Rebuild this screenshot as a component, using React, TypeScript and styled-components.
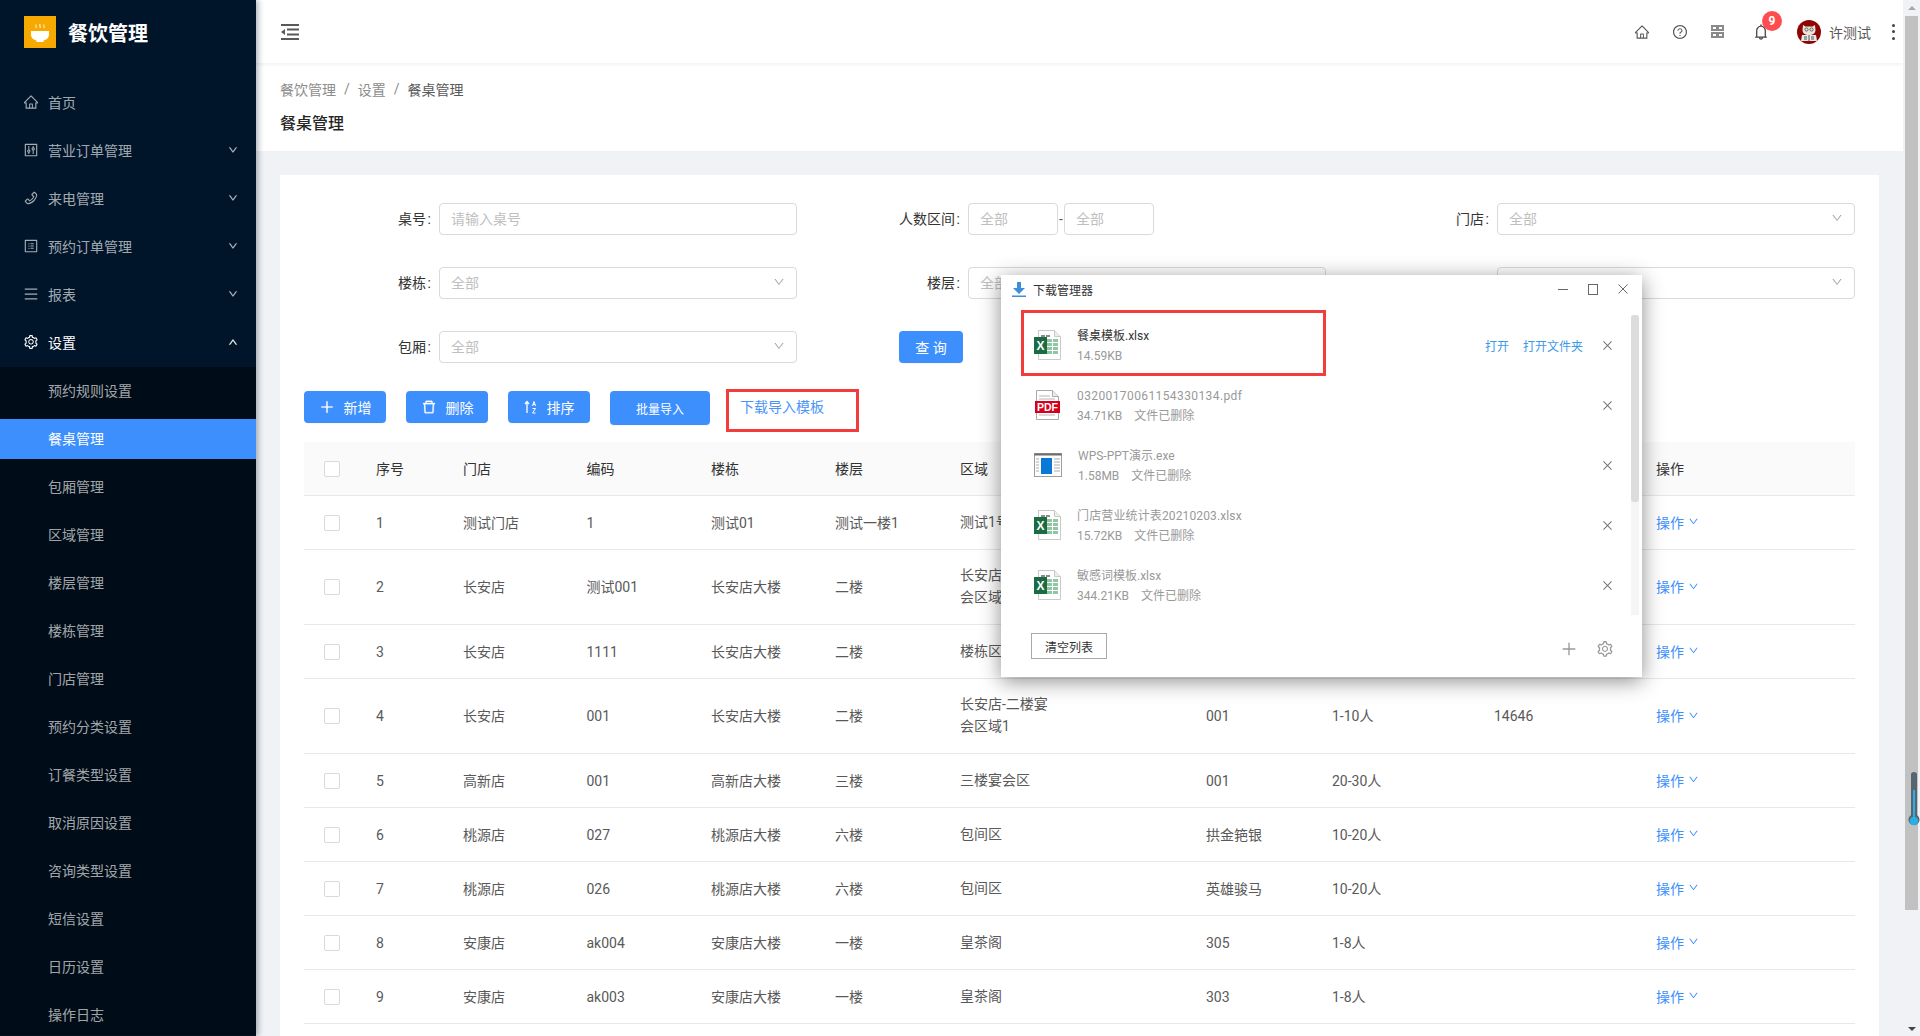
import React from 'react';
import styled, { createGlobalStyle } from 'styled-components';
import {
  AiOutlineHome, AiOutlineControl, AiOutlinePhone, AiOutlineProfile, AiOutlineMenu, AiOutlineSetting,
  AiOutlineDown, AiOutlineUp, AiOutlineQuestionCircle, AiOutlineBell, AiOutlinePlus, AiOutlineDelete,
  AiOutlineClose,
} from 'react-icons/ai';

const FONT = `Roboto, "Noto Sans CJK SC", "Noto Sans", sans-serif`;

const Global = createGlobalStyle`
  * { box-sizing: border-box; }
  html, body { margin: 0; padding: 0; height: 100%; overflow: hidden; }
  body { font-family: ${FONT}; font-size: 14px; color: #595959; background: #f0f2f5; }
  #root { height: 1036px; }
`;

const Page = styled.div`
  position: relative;
  display: flex;
  width: 1920px;
  height: 1036px;
  overflow: hidden;
`;

/* ---------- sidebar ---------- */
const Sidebar = styled.aside`
  width: 256px;
  flex: none;
  background: #001529;
  box-shadow: 2px 0 6px rgba(0, 21, 41, 0.35);
  z-index: 3;
  overflow: hidden;
`;
const Brand = styled.div`
  display: flex;
  align-items: center;
  gap: 12px;
  height: 64px;
  padding-left: 24px;
`;
const BrandName = styled.span`
  font-size: 20px;
  font-weight: 700;
  color: #fff;
`;
const Menu = styled.nav`
  padding-top: 18px;
`;
const MenuItem = styled.div<{ $light?: boolean }>`
  display: flex;
  align-items: center;
  height: 40px;
  margin-bottom: 8px;
  padding: 0 18px 0 23px;
  color: ${(p) => (p.$light ? '#fff' : 'rgba(255,255,255,.65)')};
  svg.lead { font-size: 16px; margin-right: 9px; flex: none; }
  svg.arrow { font-size: 10px; margin-left: auto; stroke: currentColor; stroke-width: 50; }
`;
const SubMenu = styled.div`
  background: #000c17;
  padding-top: 4px;
  margin-top: -3px;
`;
const SubItem = styled.div<{ $active?: boolean }>`
  height: 40px;
  line-height: 40px;
  margin-bottom: 8px;
  padding-left: 48px;
  color: ${(p) => (p.$active ? '#fff' : 'rgba(255,255,255,.65)')};
  background: ${(p) => (p.$active ? '#3d8ffe' : 'transparent')};
`;

/* ---------- main ---------- */
const Main = styled.main`
  flex: 1;
  min-width: 0;
  display: flex;
  flex-direction: column;
`;
const Header = styled.header`
  height: 63px;
  flex: none;
  display: flex;
  align-items: center;
  padding-left: 25px;
  background: #fff;
  box-shadow: 0 1px 4px rgba(0, 21, 41, 0.08);
  position: relative;
  z-index: 2;
`;
const HeaderRight = styled.div`
  margin-left: auto;
  display: flex;
  align-items: center;
  color: #555;
  padding-right: 8px;
`;
const HeaderIcon = styled.span<{ $w: number }>`
  width: ${(p) => p.$w}px;
  display: flex;
  color: #555;
  font-size: 16px;
`;
const BellWrap = styled.span`
  position: relative;
  display: flex;
  width: 45px;
  font-size: 18px;
  color: #444;
`;
const Badge = styled.span`
  position: absolute;
  left: 10px;
  top: -12px;
  width: 20px;
  height: 20px;
  border-radius: 50%;
  background: #ff4d4f;
  color: #fff;
  font-size: 12px;
  font-weight: 700;
  line-height: 20px;
  text-align: center;
`;
const UserName = styled.span`
  margin-left: 8px;
  width: 63px;
  color: #595959;
`;
const Dots = styled.span`
  display: flex;
  flex-direction: column;
  gap: 3.5px;
  i { width: 3px; height: 3px; border-radius: 50%; background: #444; display: block; }
`;
const PageHead = styled.div`
  height: 88px;
  flex: none;
  padding: 16px 0 0 24px;
  background: #fff;
`;
const Crumbs = styled.div`
  display: flex;
  align-items: center;
  height: 20px;
  color: #8c8c8c;
  span.sep { margin: 0 8px; color: #8c8c8c; }
  span.cur { color: #595959; }
`;
const PageTitle = styled.h1`
  margin: 13px 0 0;
  font-size: 16px;
  font-weight: 500;
  line-height: 24px;
  color: #262626;
`;
const Card = styled.section`
  flex: 1;
  margin: 24px 24px 0;
  padding: 28px 24px 0;
  background: #fff;
  min-height: 0;
  overflow: hidden;
`;
const FormGrid = styled.div`
  display: grid;
  grid-template-columns: repeat(3, 493px);
  column-gap: 36px;
  row-gap: 32px;
`;
const Field = styled.div`
  display: flex;
  align-items: center;
  height: 32px;
`;
const Label = styled.label`
  width: 135px;
  flex: none;
  padding: 0 8px 2px 0;
  text-align: right;
  color: #333;
  span { margin-left: 1.5px; }
`;
const InputBox = styled.div<{ $w?: number }>`
  display: flex;
  align-items: center;
  justify-content: space-between;
  height: 32px;
  flex: ${(p) => (p.$w ? 'none' : '1')};
  width: ${(p) => (p.$w ? `${p.$w}px` : 'auto')};
  padding: 0 11px 2px;
  border: 1px solid #d9d9d9;
  border-radius: 4px;
  color: #bfbfbf;
  background: #fff;
  svg { font-size: 12px; color: #a6a6a6; }
`;
const Dash = styled.span`
  width: 6px;
  text-align: center;
  color: #595959;
  line-height: 1;
`;
const QueryCell = styled.div`
  padding-left: 66px;
`;
const PrimaryButton = styled.button<{ $w: number; $h?: number; $ml?: number; $small?: boolean }>`
  display: inline-flex;
  align-items: center;
  justify-content: center;
  gap: 9px;
  width: ${(p) => p.$w}px;
  height: ${(p) => p.$h ?? 32}px;
  margin-left: ${(p) => p.$ml ?? 0}px;
  padding: 0;
  border: 0;
  border-radius: 4px;
  background: #3d8ffe;
  color: #fff;
  font-family: inherit;
  font-size: ${(p) => (p.$small ? 12 : 14)}px;
  box-shadow: 0 1px 0 rgba(0, 0, 0, 0.03);
  svg { font-size: 16px; stroke: currentColor; stroke-width: 20; }
`;
const Actions = styled.div`
  display: flex;
  align-items: flex-start;
  margin-top: 28px;
  height: 51px;
`;
const TemplateLink = styled.a`
  display: block;
  width: 133px;
  height: 43px;
  margin: -2px 0 0 16px;
  padding: 4px 0 0 11px;
  border: 3px solid #f33c3c;
  color: #4b94f7;
  line-height: 22px;
`;
const Table = styled.div`
  width: 100%;
`;
const Row = styled.div<{ $head?: boolean; $tall?: boolean }>`
  display: grid;
  grid-template-columns: 72px 87px 123.5px 124.5px 124px 125px 246px 126px 162px 162px 199px;
  align-items: center;
  height: ${(p) => (p.$head ? 54 : p.$tall ? 75 : 54)}px;
  background: ${(p) => (p.$head ? '#fafafa' : '#fff')};
  color: ${(p) => (p.$head ? '#333' : '#595959')};
  border-bottom: 1px solid #e8e8e8;
`;
const Cell = styled.div<{ $latin?: boolean; $area?: boolean }>`
  padding-bottom: ${(p) => (p.$latin ? 0 : 2)}px;
  max-width: ${(p) => (p.$area ? '100px' : 'none')};
  line-height: ${(p) => (p.$area ? '22px' : 'inherit')};
`;
const CheckCell = styled.div`
  padding-left: 20px;
  display: flex;
`;
const CheckBox = styled.span`
  width: 16px;
  height: 16px;
  border: 1px solid #d9d9d9;
  border-radius: 2px;
  background: #fff;
`;
const OpLink = styled.a`
  display: inline-flex;
  align-items: center;
  gap: 4px;
  color: #3d8ffe;
  svg { font-size: 11px; }
`;

/* ---------- download manager ---------- */
const Popup = styled.div`
  position: absolute;
  left: 1001px;
  top: 275px;
  width: 641px;
  height: 402px;
  background: #fff;
  box-shadow: 0 4px 20px rgba(0, 0, 0, 0.45);
  z-index: 5;
  display: flex;
  flex-direction: column;
  font-size: 12px;
`;
const PopupBar = styled.div`
  height: 28px;
  flex: none;
  display: flex;
  align-items: center;
  padding: 0 14px 0 11px;
  color: #333;
`;
const PopupTitle = styled.span`
  margin-left: 7px;
`;
const WinButtons = styled.div`
  margin-left: auto;
  display: flex;
  align-items: center;
  gap: 20px;
  color: #666;
`;
const PopupBody = styled.div`
  position: relative;
  flex: 1;
  margin-top: 12px;
  padding-left: 20px;
  min-height: 0;
`;
const PopScrollTrack = styled.div`
  position: absolute;
  right: 3px;
  top: 0;
  width: 8px;
  height: 300px;
  background: #f5f5f5;
`;
const PopScrollThumb = styled.div`
  height: 187px;
  background: #dcdcdc;
  border-radius: 3px;
`;
const FileRow = styled.div`
  position: relative;
  height: 60px;
  display: flex;
  align-items: center;
  padding-left: 13px;
  padding-right: 28px;
`;
const RedBox = styled.div`
  position: absolute;
  left: 0;
  top: -5px;
  width: 305px;
  height: 66px;
  border: 3px solid #f33c3c;
  pointer-events: none;
`;
const FileInfo = styled.div`
  margin: 2px 0 0 16px;
  display: flex;
  flex-direction: column;
  gap: 3px;
  line-height: 17px;
`;
const FileName = styled.div<{ $gone?: boolean; $spacing?: number }>`
  color: ${(p) => (p.$gone ? '#999' : '#333')};
  letter-spacing: ${(p) => p.$spacing ?? 0}px;
`;
const FileMeta = styled.div`
  color: #999;
  span { margin-left: 12px; }
`;
const FileLinks = styled.div`
  margin-left: auto;
  display: flex;
  gap: 14px;
  color: #3c9ae8;
`;
const RemoveBtn = styled.span<{ $alone?: boolean }>`
  margin-left: ${(p) => (p.$alone ? 'auto' : '18px')};
  display: flex;
  color: #777;
  font-size: 13px;
`;
const PopupFoot = styled.div`
  height: 62px;
  flex: none;
  display: flex;
  align-items: flex-start;
  padding: 18px 28px 0 30px;
`;
const ClearBtn = styled.button`
  width: 76px;
  height: 26px;
  margin: 0;
  border: 1px solid #aaa;
  background: #fff;
  color: #333;
  font: inherit;
  padding: 0;
`;
const FootIcons = styled.div`
  margin-left: auto;
  margin-top: 7px;
  display: flex;
  gap: 18px;
  color: #999;
  font-size: 18px;
`;

/* ---------- scrollbar ---------- */
const ScrollBar = styled.div`
  width: 17px;
  flex: none;
  background: #f0f2f5;
  display: flex;
  flex-direction: column;
  align-items: flex-end;
  position: relative;
  z-index: 3;
`;
const ScrollArrowUp = styled.div`
  margin: 6px 4px 0 0;
  width: 0;
  height: 0;
  border-left: 4px solid transparent;
  border-right: 4px solid transparent;
  border-bottom: 4px solid #a8a8a8;
`;
const ScrollThumb = styled.div`
  margin: 6px 2px 0 0;
  width: 13px;
  height: 894px;
  background: #c1c1c1;
`;
const ScrollArrowDown = styled.div`
  margin: 117px 4px 0 0;
  width: 0;
  height: 0;
  border-left: 4px solid transparent;
  border-right: 4px solid transparent;
  border-top: 4px solid #444;
`;
const Thermo = styled.svg`
  position: absolute;
  left: 1908px;
  top: 772px;
  z-index: 6;
`;

/* ---------- drawings ---------- */
const Logo = () => (
  <svg width="32" height="32" viewBox="0 0 32 32">
    <rect width="32" height="32" fill="#f7a900" />
    <path d="M7 15h18v3c0 4-2.500 6-5.500 6.500v1.500h-7v-1.500C9.500 24 7 22 7 18z" fill="#fff" />
    <path d="M12 8.500c-.8 1.500.8 2 0 3.500M16 8c-.8 1.500.8 2.500 0 4M20 8.500c-.8 1.500.8 2 0 3.500" stroke="#fff" strokeWidth="1" fill="none" />
  </svg>
);
const FoldIcon = () => (
  <svg width="18" height="16" viewBox="0 0 18 16" style={{ display: 'block' }}>
    <path d="M0 0h18v2H0zM6 4.500h12v2H6zM6 9.500h12v2H6zM0 14h18v2H0z" fill="#595959" />
    <path d="M4 5v6L0 8z" fill="#595959" />
  </svg>
);
const GridIcon = () => (
  <svg width="13" height="13" viewBox="0 0 13 13" style={{ display: 'block' }}>
    <path d="M0 0h13v6H0zM0 7h13v6H0z" fill="#8a8a8a" />
    <path d="M2 2h3v2H2zM8 2h3v2H8zM2 9h3v2H2zM8 9h3v2H8z" fill="#fff" />
  </svg>
);
const SortIcon = () => (
  <svg width="14" height="14" viewBox="0 0 14 14" fill="none" style={{ width: 14, height: 14 }}>
    <path d="M3 13V1.500M1 4l2-2.500L5 4" strokeWidth="1.300" stroke="#fff" />
    <path d="M8.500 6 10 1.500 11.500 6M9 4.500h2M8.500 8.500h3l-3 4.500h3" strokeWidth="1" stroke="#fff" />
  </svg>
);
const Avatar = () => (
  <svg width="24" height="24" viewBox="0 0 24 24">
    <circle cx="12" cy="12" r="12" fill="#8f0505" />
    <path d="M6 5l2.500 1.500h7L18 5l.5 5c0 3-2.500 5-6.500 5s-6.500-2-6.500-5z" fill="#ece4da" />
    <circle cx="9.500" cy="9.500" r="1.600" fill="none" stroke="#333" strokeWidth=".7" />
    <circle cx="14.500" cy="9.500" r="1.600" fill="none" stroke="#333" strokeWidth=".7" />
    <path d="M5 15h14l1 6H4z" fill="#e8e8e8" />
    <path d="M12 15v6M7 17h3M14 17h3M7 19h3M14 19h3" stroke="#444" strokeWidth=".9" />
  </svg>
);
const ExcelIcon = () => (
  <svg width="27" height="30" viewBox="0 0 27 30">
    <path d="M4.500.5h16l6 6v23h-22z" fill="#fff" stroke="#c9c9c9" />
    <path d="M20.500.5v6h6" fill="#eee" stroke="#c9c9c9" />
    <path d="M7 5h4v2H7zM12 5h4v2h-4z" fill="#8d8d8d" />
    <g fill="#8fc7a5">
      {[9, 13, 17, 21].map((y) => (
        <React.Fragment key={y}>
          <rect x="13" y={y} width="5" height="3" />
          <rect x="19" y={y} width="5" height="3" />
        </React.Fragment>
      ))}
    </g>
    <rect y="7" width="13" height="17" fill="#1c6b42" />
    <text x="6.500" y="19.500" textAnchor="middle" fontSize="12" fontWeight="700" fill="#fff" fontFamily="Liberation Sans, sans-serif">X</text>
  </svg>
);
const PdfIcon = () => (
  <svg width="27" height="30" viewBox="0 0 27 30">
    <path d="M2.500.5h16l6 6v23h-22z" fill="#fff" stroke="#a9a9a9" />
    <path d="M18.500.5v6h6" fill="#eee" stroke="#a9a9a9" />
    <path d="M5 6h11M5 9h16M5 25h16" stroke="#b5b5b5" />
    <rect x="1" y="11" width="25" height="12" fill="#d6001c" />
    <text x="13.500" y="21" textAnchor="middle" fontSize="10.500" fontWeight="700" fill="#fff" fontFamily="Liberation Sans, sans-serif">PDF</text>
  </svg>
);
const ExeIcon = () => (
  <svg width="28" height="30" viewBox="0 0 28 30">
    <rect x=".5" y="3.500" width="27" height="23" fill="#fff" stroke="#9d9d9d" />
    <rect x=".5" y="3.500" width="27" height="2" fill="#6d6d6d" />
    <rect x="7" y="8" width="11" height="16" fill="#0a78d6" />
    <path d="M2 9h3M2 12h3M2 15h3M2 18h3M2 21h3M20 9h6M20 12h6M20 15h6M20 18h6M20 21h6" stroke="#aaa" />
  </svg>
);
const DownloadMark = () => (
  <svg width="14" height="15" viewBox="0 0 14 15" style={{ display: 'block' }}>
    <path d="M5 0h4v6h4l-6 6-6-6h4z" fill="#3f8fd8" />
    <path d="M0 13.500h14V15H0z" fill="#3f8fd8" />
  </svg>
);
const ThermoIcon = () => (
  <Thermo width="12" height="56" viewBox="0 0 12 56">
    <path d="M3 2.500a3 2.500 0 0 1 6 0V43a5.500 5.500 0 1 1-6 0z" fill="#56656f" />
    <rect x="5" y="18" width="2" height="28" fill="#29aee6" />
    <circle cx="6" cy="49" r="4.300" fill="#29aee6" />
  </Thermo>
);

/* ---------- data ---------- */
const subItems = ['预约规则设置', '餐桌管理', '包厢管理', '区域管理', '楼层管理', '楼栋管理', '门店管理', '预约分类设置', '订餐类型设置', '取消原因设置', '咨询类型设置', '短信设置', '日历设置', '操作日志'];
const topItems = [
  { name: '营业订单管理', Icon: AiOutlineControl },
  { name: '来电管理', Icon: AiOutlinePhone },
  { name: '预约订单管理', Icon: AiOutlineProfile },
  { name: '报表', Icon: AiOutlineMenu },
];
const heads = ['序号', '门店', '编码', '楼栋', '楼层', '区域', '包厢', '人数', '电话', '操作'];
const rows: { c: string[]; tall?: boolean }[] = [
  { c: ['1', '测试门店', '1', '测试01', '测试一楼1', '测试1号区域', '', '', ''] },
  { c: ['2', '长安店', '测试001', '长安店大楼', '二楼', '长安店-二楼宴会区域', '', '', ''], tall: true },
  { c: ['3', '长安店', '1111', '长安店大楼', '二楼', '楼栋区域', '', '', ''] },
  { c: ['4', '长安店', '001', '长安店大楼', '二楼', '长安店-二楼宴会区域1', '001', '1-10人', '14646'], tall: true },
  { c: ['5', '高新店', '001', '高新店大楼', '三楼', '三楼宴会区', '001', '20-30人', ''] },
  { c: ['6', '桃源店', '027', '桃源店大楼', '六楼', '包间区', '拱金筢银', '10-20人', ''] },
  { c: ['7', '桃源店', '026', '桃源店大楼', '六楼', '包间区', '英雄骏马', '10-20人', ''] },
  { c: ['8', '安康店', 'ak004', '安康店大楼', '一楼', '皇茶阁', '305', '1-8人', ''] },
  { c: ['9', '安康店', 'ak003', '安康店大楼', '一楼', '皇茶阁', '303', '1-8人', ''] },
];
const files = [
  { name: '03200170061154330134.pdf', size: '34.71KB', Icon: PdfIcon, spacing: 0.4 },
  { name: 'WPS-PPT演示.exe', size: '1.58MB', Icon: ExeIcon, spacing: 0 },
  { name: '门店营业统计表20210203.xlsx', size: '15.72KB', Icon: ExcelIcon, spacing: 0.13 },
  { name: '敏感词模板.xlsx', size: '344.21KB', Icon: ExcelIcon, spacing: 0 },
];

const FieldLabel = ({ text }: { text: string }) => <Label>{text}<span>:</span></Label>;

const SelectField = ({ label }: { label: string }) => (
  <Field>
    <FieldLabel text={label} />
    <InputBox>全部<AiOutlineDown /></InputBox>
  </Field>
);

export default function App() {
  return (
    <Page>
      <Global />
      <Sidebar>
        <Brand><Logo /><BrandName>餐饮管理</BrandName></Brand>
        <Menu>
          <MenuItem><AiOutlineHome className="lead" />首页</MenuItem>
          {topItems.map(({ name, Icon }) => (
            <MenuItem key={name}><Icon className="lead" />{name}<AiOutlineDown className="arrow" /></MenuItem>
          ))}
          <MenuItem $light><AiOutlineSetting className="lead" />设置<AiOutlineUp className="arrow" /></MenuItem>
          <SubMenu>
            {subItems.map((s) => <SubItem key={s} $active={s === '餐桌管理'}>{s}</SubItem>)}
          </SubMenu>
        </Menu>
      </Sidebar>

      <Main>
        <Header>
          <FoldIcon />
          <HeaderRight>
            <HeaderIcon $w={38}><AiOutlineHome /></HeaderIcon>
            <HeaderIcon $w={39}><AiOutlineQuestionCircle /></HeaderIcon>
            <HeaderIcon $w={41}><GridIcon /></HeaderIcon>
            <BellWrap><AiOutlineBell /><Badge>9</Badge></BellWrap>
            <Avatar />
            <UserName>许测试</UserName>
            <Dots><i /><i /><i /></Dots>
          </HeaderRight>
        </Header>
        <PageHead>
          <Crumbs>餐饮管理<span className="sep">/</span>设置<span className="sep">/</span><span className="cur">餐桌管理</span></Crumbs>
          <PageTitle>餐桌管理</PageTitle>
        </PageHead>
        <Card>
          <FormGrid>
            <Field><FieldLabel text="桌号" /><InputBox>请输入桌号</InputBox></Field>
            <Field>
              <FieldLabel text="人数区间" />
              <InputBox $w={90}>全部</InputBox><Dash>-</Dash><InputBox $w={90}>全部</InputBox>
            </Field>
            <SelectField label="门店" />
            <SelectField label="楼栋" />
            <SelectField label="楼层" />
            <SelectField label="区域" />
            <SelectField label="包厢" />
            <QueryCell><PrimaryButton $w={64}>查 询</PrimaryButton></QueryCell>
          </FormGrid>
          <Actions>
            <PrimaryButton $w={82}><AiOutlinePlus />新增</PrimaryButton>
            <PrimaryButton $w={82} $ml={20}><AiOutlineDelete />删除</PrimaryButton>
            <PrimaryButton $w={82} $ml={20}><SortIcon />排序</PrimaryButton>
            <PrimaryButton $w={100} $h={34} $ml={20} $small>批量导入</PrimaryButton>
            <TemplateLink>下载导入模板</TemplateLink>
          </Actions>
          <Table>
            <Row $head>
              <CheckCell><CheckBox /></CheckCell>
              {heads.map((h) => <Cell key={h}>{h}</Cell>)}
            </Row>
            {rows.map((r) => (
              <Row key={r.c[0]} $tall={r.tall}>
                <CheckCell><CheckBox /></CheckCell>
                {r.c.map((v, i) => (
                  <Cell key={i} $area={i === 5} $latin={/^[\x00-\x7f]*$/.test(v)}>{v}</Cell>
                ))}
                <Cell><OpLink>操作<AiOutlineDown /></OpLink></Cell>
              </Row>
            ))}
          </Table>
        </Card>
      </Main>

      <ScrollBar>
        <ScrollArrowUp />
        <ScrollThumb />
        <ScrollArrowDown />
      </ScrollBar>
      <ThermoIcon />

      <Popup>
        <PopupBar>
          <DownloadMark />
          <PopupTitle>下载管理器</PopupTitle>
          <WinButtons>
            <svg width="10" height="10" viewBox="0 0 10 10"><path d="M0 5.500h10" stroke="#666" /></svg>
            <svg width="10" height="11" viewBox="0 0 10 11"><rect x=".5" y=".5" width="9" height="10" fill="none" stroke="#666" /></svg>
            <svg width="10" height="10" viewBox="0 0 10 10"><path d="M.5.5l9 9M9.500.5l-9 9" stroke="#666" /></svg>
          </WinButtons>
        </PopupBar>
        <PopupBody>
          <PopScrollTrack><PopScrollThumb /></PopScrollTrack>
          <FileRow>
            <RedBox />
            <ExcelIcon />
            <FileInfo>
              <FileName>餐桌模板.xlsx</FileName>
              <FileMeta>14.59KB</FileMeta>
            </FileInfo>
            <FileLinks><span>打开</span><span>打开文件夹</span></FileLinks>
            <RemoveBtn><AiOutlineClose /></RemoveBtn>
          </FileRow>
          {files.map(({ name, size, Icon, spacing }) => (
            <FileRow key={name}>
              <Icon />
              <FileInfo>
                <FileName $gone $spacing={spacing}>{name}</FileName>
                <FileMeta>{size}<span>文件已删除</span></FileMeta>
              </FileInfo>
              <RemoveBtn $alone><AiOutlineClose /></RemoveBtn>
            </FileRow>
          ))}
        </PopupBody>
        <PopupFoot>
          <ClearBtn>清空列表</ClearBtn>
          <FootIcons><AiOutlinePlus /><AiOutlineSetting /></FootIcons>
        </PopupFoot>
      </Popup>
    </Page>
  );
}
